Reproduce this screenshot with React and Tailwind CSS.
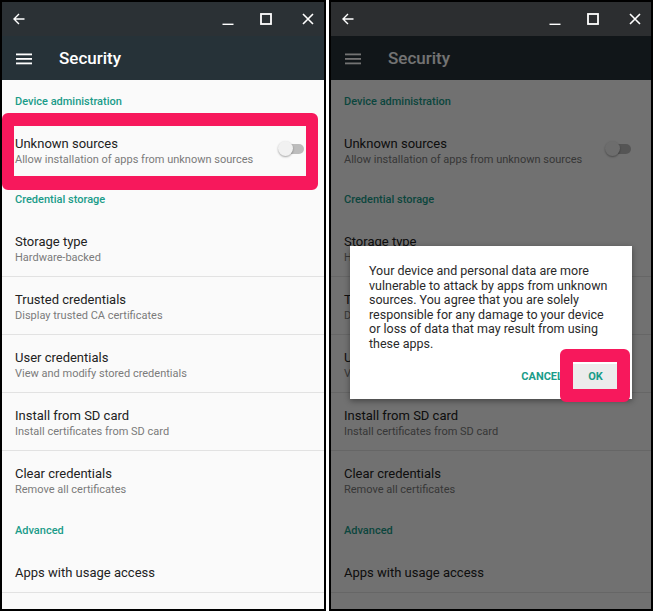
import React from 'react';

const font = { fontFamily: 'Roboto, "Noto Sans", Arial, sans-serif' };

function TitleBar({ bg }) {
  return (
    <div className={`flex h-[34px] shrink-0 items-center pl-[11px] pr-[10px] ${bg}`}>
      <svg width="12" height="12" viewBox="0 0 12 12" fill="none" stroke="white" strokeWidth="1.4">
        <path d="M11.5 6H1M6 1 1 6l5 5" />
      </svg>
      <div className="ml-auto flex items-center">
        <svg width="12" height="12" viewBox="0 0 12 12" fill="none" stroke="white" strokeWidth="1.8">
          <path d="M0.5 11.5h11" />
        </svg>
        <svg className="ml-[26px]" width="12" height="12" viewBox="0 0 12 12" fill="none" stroke="white" strokeWidth="1.8">
          <rect x="1" y="1" width="10" height="10" />
        </svg>
        <svg className="ml-[30px]" width="12" height="12" viewBox="0 0 12 12" fill="none" stroke="white" strokeWidth="1.6">
          <path d="M1 1l10 10M11 1 1 11" />
        </svg>
      </div>
    </div>
  );
}

function Header({ children, h }) {
  return (
    <div className={`flex items-center px-[13px] pt-[3px] text-[11px] font-medium text-[#1a9c89] ${h}`}>{children}</div>
  );
}

function Row({ title, sub, toggle, divider = true }) {
  return (
    <div className={`flex h-[58px] items-start px-[13px] pt-[15px] ${divider ? 'border-b border-[#e2e2e2]' : ''}`}>
      <div className="flex-1">
        <div className="text-[13px] leading-[16px] text-[#222]">{title}</div>
        <div className="text-[11px] leading-[16px] text-[#7b7b7b]">{sub}</div>
      </div>
      {toggle && (
        <div className="relative mr-[7px] mt-[5px] h-[15px] w-[26px]">
          <div className="absolute right-0 top-[3px] h-[10px] w-[22px] rounded-full bg-[#bdbdbd]" />
          <div className="absolute left-0 top-0 h-[15px] w-[15px] rounded-full bg-[#f1f1f1] shadow-[0_1px_2px_rgba(0,0,0,0.35)]" />
        </div>
      )}
    </div>
  );
}

function Settings() {
  return (
    <div className="flex-1 bg-[#fafafa]">
      <Header h="h-[41px]">Device administration</Header>
      <Row title="Unknown sources" sub="Allow installation of apps from unknown sources" toggle divider={false} />
      <Header h="h-[40px]">Credential storage</Header>
      <Row title="Storage type" sub="Hardware-backed" />
      <Row title="Trusted credentials" sub="Display trusted CA certificates" />
      <Row title="User credentials" sub="View and modify stored credentials" />
      <Row title="Install from SD card" sub="Install certificates from SD card" />
      <Row title="Clear credentials" sub="Remove all certificates" divider={false} />
      <Header h="h-[42px]">Advanced</Header>
      <div className="flex h-[42px] items-center border-b border-[#e2e2e2] px-[13px] pt-[2px] text-[13px] text-[#222]">
        Apps with usage access
      </div>
    </div>
  );
}

function Panel({ dimmed, width, titleBg }) {
  return (
    <div className={`flex h-[611px] flex-col overflow-hidden border-2 border-black ${width}`}>
      <TitleBar bg={titleBg} />
      <div className="relative flex flex-1 flex-col">
        <div className="flex h-[44px] shrink-0 items-center bg-[#263238] pl-[14px] pt-[2px]">
          <svg width="16" height="12" viewBox="0 0 16 12" fill="white">
            <rect y="0.5" width="16" height="1.8" />
            <rect y="5" width="16" height="1.8" />
            <rect y="9.5" width="16" height="1.8" />
          </svg>
          <span className="ml-[27px] text-[17px] font-medium text-white">Security</span>
        </div>
        <Settings />

        {!dimmed && (
          <div className="absolute left-0 top-[77px] h-[77px] w-[316px] rounded-[6px] border-x-[12px] border-t-[13px] border-b-[14px] border-[#f7185c]" />
        )}

        {dimmed && (
          <>
            <div className="absolute inset-0 bg-black/[0.55]" />
            <div className="absolute left-[19px] top-[210px] w-[282px] bg-white pb-[8px] pl-[19px] pr-[14px] pt-[18px] shadow-[0_2px_6px_rgba(0,0,0,0.4)]">
              <p className="text-[12.5px] leading-[14.5px] text-[#2a2a2a]">
                Your device and personal data are more<br />
                vulnerable to attack by apps from unknown<br />
                sources. You agree that you are solely<br />
                responsible for any damage to your device<br />
                or loss of data that may result from using<br />
                these apps.
              </p>
              <div className="mt-[13px] flex items-center justify-end">
                <span className="text-[11px] font-bold text-[#1a9c89]">CANCEL</span>
                <span className="ml-[10px] flex h-[27px] w-[45px] items-center justify-center bg-[#ececec] text-[11px] font-bold text-[#1a9c89]">
                  OK
                </span>
              </div>
            </div>
            <div className="absolute left-[229px] top-[313px] h-[53px] w-[70px] rounded-[6px] border-[13px] border-[#f7185c]" />
          </>
        )}
      </div>
    </div>
  );
}

export default function App() {
  return (
    <div className="flex h-[612px] w-[653px] gap-[3px] bg-white" style={font}>
      <Panel width="w-[326px]" titleBg="bg-[#2b3135]" />
      <Panel dimmed width="w-[324px]" titleBg="bg-[#2c2e30]" />
    </div>
  );
}
